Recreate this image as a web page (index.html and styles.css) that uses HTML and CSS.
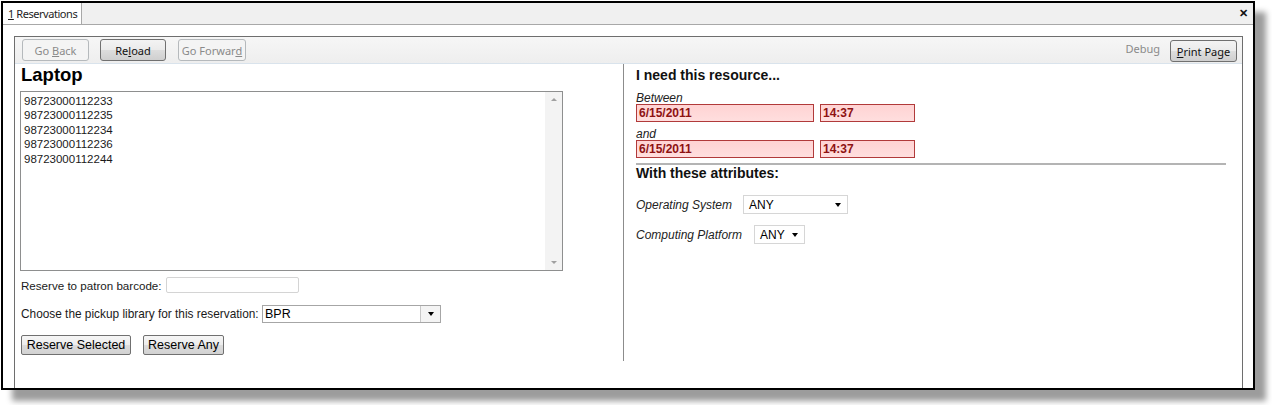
FILE: index.html
```html
<!DOCTYPE html>
<html>
<head>
<meta charset="utf-8">
<title>Reservations</title>
<link rel="stylesheet" href="styles.css">
</head>
<body>
<div class="frame">
  <div class="tabbar">
    <div class="tab"><u>1</u>&nbsp;Reservations</div>
    <div class="close">&#x2715;</div>
  </div>
  <div class="content">
    <div class="panel">
      <div class="toolbar">
        <button class="tb disabled w-back">Go <u>B</u>ack</button>
        <button class="tb w-reload">Re<u>l</u>oad</button>
        <button class="tb disabled w-fwd">Go Forwar<u>d</u></button>
        <span class="spacer"></span>
        <span class="debug">Debug</span>
        <button class="tb print"><u>P</u>rint Page</button>
      </div>
      <div class="main">
        <div class="left">
          <div class="title">Laptop</div>
          <div class="listbox">
            <div class="items">
              <div class="item">98723000112233</div>
              <div class="item">98723000112235</div>
              <div class="item">98723000112234</div>
              <div class="item">98723000112236</div>
              <div class="item">98723000112244</div>
            </div>
            <div class="vscroll">
              <span class="arr up"></span>
              <span class="arr down"></span>
            </div>
          </div>
          <div class="row r-barcode">
            <span class="lbl l-barcode">Reserve to patron barcode:</span>
            <input class="barcode" type="text" value="">
          </div>
          <div class="row r-lib">
            <span class="lbl l-lib">Choose the pickup library for this reservation:</span>
            <div class="menulist">
              <span class="mtext">BPR</span>
              <span class="mbtn"><span class="tri"></span></span>
            </div>
          </div>
          <div class="row r-btns">
            <button class="pbtn w-sel">Reserve Selected</button>
            <button class="pbtn w-any">Reserve Any</button>
          </div>
        </div>
        <div class="right">
          <div class="heading">I need this resource...</div>
          <div class="cap c-between">Between</div>
          <div class="dtrow">
            <input class="bad date" type="text" value="6/15/2011">
            <input class="bad time" type="text" value="14:37">
          </div>
          <div class="cap c-and">and</div>
          <div class="dtrow">
            <input class="bad date" type="text" value="6/15/2011">
            <input class="bad time" type="text" value="14:37">
          </div>
          <div class="sep"></div>
          <div class="heading">With these attributes:</div>
          <div class="attr a-os">
            <span class="alabel">Operating System</span>
            <div class="sel s-os"><span>ANY</span><span class="tri"></span></div>
          </div>
          <div class="attr a-cp">
            <span class="alabel">Computing Platform</span>
            <div class="sel s-cp"><span>ANY</span><span class="tri"></span></div>
          </div>
        </div>
      </div>
    </div>
  </div>
</div>
</body>
</html>
```

FILE: styles.css
```css
* { box-sizing: border-box; }
html, body { margin: 0; padding: 0; background: #fff; }
body {
  width: 1272px;
  height: 405px;
  overflow: hidden;
  font-family: "Liberation Sans", Arial, sans-serif;
  color: #1a1a1a;
}
.frame {
  margin: 1px 0 0 1px;
  width: 1254px;
  height: 389px;
  border: 2px solid #000;
  box-shadow: 11px 11px 6px #9c9c9c;
  display: flex;
  flex-direction: column;
  overflow: hidden;
  background: #fff;
}
.tabbar {
  flex: none;
  height: 22px;
  background: #f0f0f0;
  border-bottom: 1px solid #a8a8a8;
  display: flex;
  align-items: stretch;
}
.tab {
  width: 79px;
  background: #fff;
  border-right: 1px solid #a8a8a8;
  font-family: "Noto Sans", sans-serif;
  font-size: 11px;
  letter-spacing: -0.45px;
  color: #1e1e1e;
  padding-left: 5px;
  display: flex;
  align-items: center;
  white-space: nowrap;
  overflow: hidden;
}
.close {
  margin-left: auto;
  padding-right: 5px;
  font-size: 11px;
  font-weight: bold;
  display: flex;
  align-items: center;
  color: #111;
}
.content {
  flex: 1;
  padding: 11px 10px 0 11px;
  overflow: hidden;
}
.panel {
  height: 420px;
  border: 1px solid #6e6e6e;
  display: flex;
  flex-direction: column;
}
.toolbar {
  flex: none;
  height: 27px;
  background: linear-gradient(#f6f6f6, #eeeeee);
  border-bottom: 1px solid #d9e3ec;
  display: flex;
  align-items: flex-start;
  padding: 2px 5px 0 7px;
}
.tb {
  height: 22px;
  margin: 0;
  padding: 0;
  font-family: "Noto Sans", sans-serif;
  font-size: 11px;
  color: #111;
  border: 1px solid #707070;
  border-radius: 3px;
  background: linear-gradient(#f3f3f3 0%, #ebebeb 48%, #dddddd 52%, #cfcfcf 100%);
}
.tb.disabled {
  color: #8a8a8a;
  border-color: #b5b9bc;
  background: #f4f4f4;
}
.w-back { width: 67px; }
.w-reload { width: 66px; margin-left: 11px; }
.w-fwd { width: 68px; margin-left: 12px; }
.spacer { flex: 1; }
.debug {
  font-family: "Noto Sans", sans-serif;
  font-size: 11px;
  color: #8a8a8a;
  margin-top: 2px;
  margin-right: 10px;
}
.print { width: 67px; margin-top: 1px; }
.main {
  display: flex;
  align-items: flex-start;
}
.left {
  width: 609px;
  border-right: 1px solid #8c8c8c;
  padding: 0 5px 6px 5px;
}
.title {
  font-size: 18.5px;
  font-weight: bold;
  line-height: 22px;
  color: #000;
  padding-left: 1px;
}
.listbox {
  margin-top: 5px;
  width: 543px;
  height: 180px;
  border: 1px solid #8e8f8f;
  display: flex;
}
.items {
  flex: 1;
  padding: 2px 0 0 3px;
  font-size: 11.5px;
  line-height: 14.4px;
  color: #1a1a1a;
}
.vscroll {
  width: 17px;
  background: #f3f3f3;
  position: relative;
}
.arr {
  position: absolute;
  left: 6px;
  width: 0;
  height: 0;
  border-left: 3px solid transparent;
  border-right: 3px solid transparent;
}
.arr.up { top: 6px; border-bottom: 3px solid #a0a0a0; }
.arr.down { bottom: 6px; border-top: 3px solid #a0a0a0; }
.row {
  display: flex;
  align-items: center;
  padding-left: 1px;
}
.lbl {
  color: #1a1a1a;
}
.l-barcode { font-size: 11.6px; width: 145px; }
.l-lib { font-size: 11.85px; width: 241px; }
.r-barcode { margin-top: 6px; }
.barcode {
  width: 133px;
  height: 16px;
  margin: 0;
  padding: 0;
  border: 1px solid #d4d4d4;
  border-radius: 2px;
  background: #fff;
}
.r-lib { margin-top: 12px; }
.menulist {
  width: 179px;
  height: 18px;
  border: 1px solid #a6a6a6;
  display: flex;
  background: #fff;
}
.mtext {
  flex: 1;
  font-size: 12.5px;
  padding-left: 2px;
  line-height: 16px;
  color: #000;
}
.mbtn {
  width: 20px;
  border-left: 1px solid #c8c8c8;
  background: #f4f4f4;
  display: flex;
  align-items: center;
  justify-content: center;
}
.tri {
  display: inline-block;
  width: 0;
  height: 0;
  border-left: 3.5px solid transparent;
  border-right: 3.5px solid transparent;
  border-top: 4px solid #000;
}
.r-btns { margin-top: 12px; }
.pbtn {
  height: 20px;
  margin: 0;
  padding: 0;
  font-family: "Liberation Sans", Arial, sans-serif;
  font-size: 12.5px;
  color: #000;
  border: 1px solid #707070;
  border-radius: 2px;
  background: linear-gradient(#f6f6f6 0%, #ececec 50%, #dcdcdc 51%, #d2d2d2 100%);
}
.w-sel { width: 110px; }
.w-any { width: 81px; margin-left: 12px; }
.right {
  flex: 1;
  padding: 3px 16px 0 12px;
}
.heading {
  font-size: 14px;
  font-weight: bold;
  line-height: 16px;
  color: #111;
}
.cap {
  font-size: 12px;
  font-style: italic;
  line-height: 12px;
  color: #222;
}
.c-between { margin-top: 9px; }
.c-and { margin-top: 6px; }
.dtrow { display: flex; }
.bad {
  height: 18px;
  margin: 0;
  padding: 0 0 0 2px;
  border: 1px solid #b13a3a;
  background: linear-gradient(#ffd3d3, #ffdede);
  font-family: "Liberation Sans", Arial, sans-serif;
  font-size: 12px;
  font-weight: bold;
  color: #8e1212;
}
.date { width: 178px; }
.time { width: 95px; margin-left: 6px; }
.sep {
  margin-top: 5px;
  height: 2px;
  background: #b4b4b4;
}
.attr {
  display: flex;
  align-items: center;
}
.a-os { margin-top: 14px; }
.a-cp { margin-top: 11px; }
.alabel {
  font-size: 12px;
  font-style: italic;
  color: #222;
}
.sel {
  height: 19px;
  border: 1px solid #d6d6d6;
  background: #fff;
  display: flex;
  align-items: center;
  justify-content: space-between;
  font-size: 12px;
  color: #000;
  padding: 0 6px 0 5px;
}
.s-os { width: 105px; margin-left: 11px; }
.s-cp { width: 51px; margin-left: 12px; }
```
